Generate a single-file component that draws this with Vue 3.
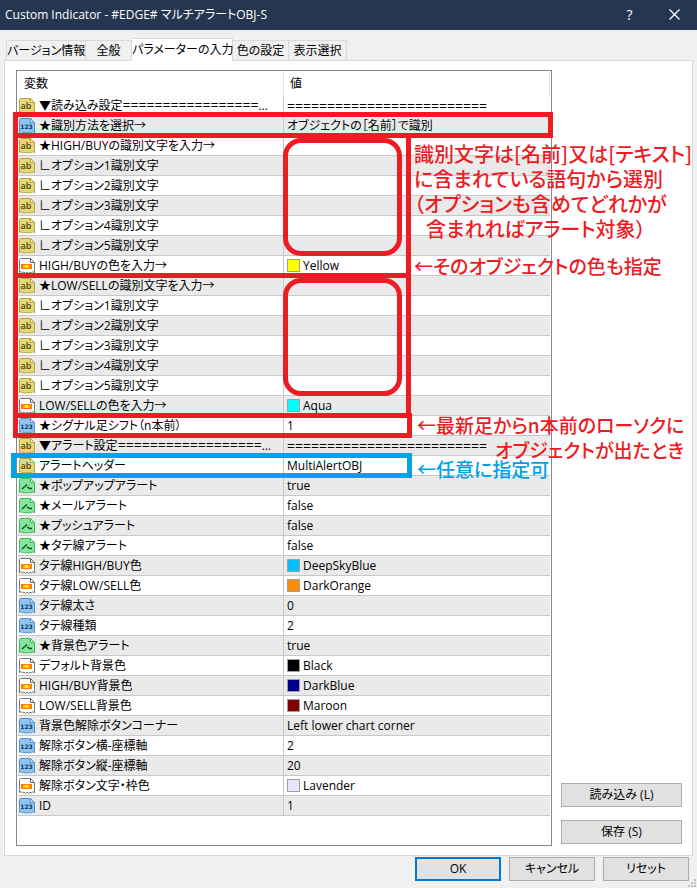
<template>
  <div class="dialog">
    <!-- タイトルバー -->
    <header class="titlebar">
      <span class="title">Custom Indicator - #EDGE# マルチアラートOBJ-S</span>
      <button class="title-btn" aria-label="ヘルプ">?</button>
      <button class="title-btn" aria-label="閉じる">
        <svg viewBox="0 0 11 11" width="11" height="11">
          <path d="M0.5 0.5 L10.5 10.5 M10.5 0.5 L0.5 10.5" stroke="#fff" stroke-width="1.3" fill="none" />
        </svg>
      </button>
    </header>

    <!-- タブ -->
    <nav class="tabs" role="tablist">
      <button
        v-for="(tab, index) in tabs"
        :key="tab"
        class="tab"
        :class="['tab-' + index, { active: currentTab === index }]"
        role="tab"
        :aria-selected="currentTab === index"
        @click="currentTab = index"
      >{{ tab }}</button>
    </nav>

    <main class="panel">
      <div class="list">
        <table>
          <colgroup>
            <col class="col-name" />
            <col />
          </colgroup>
          <thead>
            <tr>
              <th>変数</th>
              <th>値</th>
            </tr>
          </thead>
          <tbody>
            <tr v-for="(row, index) in rows" :key="index">
              <td>
                <div class="cell">
                  <svg class="icon" :class="row.type" viewBox="0 0 16 16">
                    <path
                      class="page"
                      d="M1.5 0.5 H11.5 L15.5 4.5 V15 L14 13.5 L12.5 15 L11 14 L9.5 15.5 L8 14 L6.5 15.5 L5 14 L3.5 15 L2 13.5 L0.5 14.5 V1.5 Z"
                    />
                    <path class="fold" d="M11.5 0.5 V4.5 H15.5 Z" />
                    <text v-if="row.type === 'str'" x="7" y="11" class="str-text">ab</text>
                    <text v-if="row.type === 'int'" x="7.5" y="11" class="int-text">123</text>
                    <path v-if="row.type === 'bool'" class="wave" d="M3 11 L8 6.5 M8 9.5 H9.5 L10.5 10.5 H13" />
                    <template v-if="row.type === 'color'">
                      <rect x="2" y="6" width="11" height="5" fill="#ff7a00" />
                      <rect x="4" y="7" width="7" height="3" fill="#ffb000" />
                      <rect x="6" y="7" width="3" height="3" fill="#fff000" />
                    </template>
                  </svg>
                  <span class="name">{{ row.name }}<span v-if="row.line" class="rule">{{ rule }}</span></span>
                </div>
              </td>
              <td>
                <div class="cell value">
                  <span v-if="row.color" class="swatch" :style="{ background: row.color }"></span>
                  <span v-if="row.line" class="rule">{{ rule }}</span>
                  <span v-else>{{ row.value }}</span>
                </div>
              </td>
            </tr>
          </tbody>
        </table>

        <!-- 説明用の枠 -->
        <div class="frame frame-method"></div>
        <div class="frame frame-high"></div>
        <div class="frame frame-low"></div>
        <div class="frame frame-shift"></div>
        <div class="frame frame-header"></div>
        <div class="frame round round-high"></div>
        <div class="frame round round-low"></div>

        <!-- 説明文 -->
        <p class="note note-text">
          識別文字は[名前]又は[テキスト]<br />に含まれている語句から選別<br />（オプションも含めてどれかが<br /><span class="indent">含まれればアラート対象）</span>
        </p>
        <p class="note note-color">←そのオブジェクトの色も指定</p>
        <p class="note note-shift">←最新足からn本前のローソクに<br /><span class="deep">オブジェクトが出たとき</span></p>
        <p class="note note-header">←任意に指定可</p>
      </div>

      <div class="side">
        <button class="btn">読み込み (L)</button>
        <button class="btn">保存 (S)</button>
      </div>
    </main>

    <footer class="footer">
      <button class="btn primary">OK</button>
      <button class="btn">キャンセル</button>
      <button class="btn">リセット</button>
    </footer>

    <svg class="grip" viewBox="0 0 9 9">
      <path d="M6 0h2v2h-2z M3 3h2v2h-2z M6 3h2v2h-2z M0 6h2v2h-2z M3 6h2v2h-2z M6 6h2v2h-2z" fill="#bfbfbf" />
    </svg>
  </div>
</template>

<script setup>
import { ref } from "vue";

const tabs = ["バージョン情報", "全般", "パラメーターの入力", "色の設定", "表示選択"];
const currentTab = ref(2);

const rule = "=".repeat(25);

const options = [1, 2, 3, 4, 5].map((n) => ({ type: "str", name: `∟オプション${n}識別文字` }));

const rows = [
  { type: "str", name: "▼読み込み設定", line: true },
  { type: "int", name: "★識別方法を選択→", value: "オブジェクトの［名前］で識別" },
  { type: "str", name: "★HIGH/BUYの識別文字を入力→" },
  ...options,
  { type: "color", name: "HIGH/BUYの色を入力→", value: "Yellow", color: "#ffff00" },
  { type: "str", name: "★LOW/SELLの識別文字を入力→" },
  ...options,
  { type: "color", name: "LOW/SELLの色を入力→", value: "Aqua", color: "#00ffff" },
  { type: "int", name: "★シグナル足シフト（n本前）", value: "1" },
  { type: "str", name: "▼アラート設定", line: true },
  { type: "str", name: "アラートヘッダー", value: "MultiAlertOBJ" },
  { type: "bool", name: "★ポップアップアラート", value: "true" },
  { type: "bool", name: "★メールアラート", value: "false" },
  { type: "bool", name: "★プッシュアラート", value: "false" },
  { type: "bool", name: "★タテ線アラート", value: "false" },
  { type: "color", name: "タテ線HIGH/BUY色", value: "DeepSkyBlue", color: "#00bfff" },
  { type: "color", name: "タテ線LOW/SELL色", value: "DarkOrange", color: "#ff8c00" },
  { type: "int", name: "タテ線太さ", value: "0" },
  { type: "int", name: "タテ線種類", value: "2" },
  { type: "bool", name: "★背景色アラート", value: "true" },
  { type: "color", name: "デフォルト背景色", value: "Black", color: "#000000" },
  { type: "color", name: "HIGH/BUY背景色", value: "DarkBlue", color: "#00008b" },
  { type: "color", name: "LOW/SELL背景色", value: "Maroon", color: "#800000" },
  { type: "int", name: "背景色解除ボタンコーナー", value: "Left lower chart corner" },
  { type: "int", name: "解除ボタン横-座標軸", value: "2" },
  { type: "int", name: "解除ボタン縦-座標軸", value: "20" },
  { type: "color", name: "解除ボタン文字・枠色", value: "Lavender", color: "#e6e6fa" },
  { type: "int", name: "ID", value: "1" },
];
</script>

<style>
body {
  margin: 0;
  background: #f0f0f0;
}
</style>

<style scoped>
.dialog {
  position: relative;
  display: flex;
  flex-direction: column;
  min-height: 100vh;
  box-sizing: border-box;
  background: #f0f0f0;
  color: #000;
  font-family: "Open Sans", "Noto Sans CJK JP", sans-serif;
  font-size: 12px;
  line-height: 18px;
  font-feature-settings: "palt";
}

button {
  padding: 0;
  font: inherit;
  font-feature-settings: inherit;
  color: inherit;
  white-space: nowrap;
}

/* タイトルバー */
.titlebar {
  display: flex;
  align-items: center;
  height: 30px;
  padding-left: 5px;
  background: #253650;
  color: #fff;
}

.title {
  flex: 1;
}

.title-btn {
  width: 45px;
  height: 30px;
  border: none;
  background: none;
  font-size: 14px;
}

/* タブ */
.tabs {
  display: flex;
  align-items: flex-end;
  height: 23px;
  margin: 8px 5px 0 6px;
}

.tab {
  height: 21px;
  border: 1px solid #d9d9d9;
  border-left: none;
  background: #f0f0f0;
}

.tab-0 {
  width: 80px;
  border-left: 1px solid #d9d9d9;
}

.tab-1 {
  width: 46px;
}

.tab-2 {
  width: 101px;
}

.tab-3 {
  width: 56px;
}

.tab-4 {
  width: 58px;
}

.tab.active {
  height: 23px;
  border-bottom: none;
  background: #fff;
  z-index: 1;
}

/* 本体 */
.panel {
  display: flex;
  gap: 9px;
  margin: -1px 4px 0;
  padding: 9px 10px 9px 11px;
  border: 1px solid #d9d9d9;
  background: #fff;
}

.list {
  position: relative;
  flex: 1;
  min-width: 0;
  padding: 1px 1px 29px;
  border: 1px solid #828790;
}

table {
  width: 100%;
  table-layout: fixed;
  border-collapse: separate;
  border-spacing: 0;
}

.col-name {
  width: 266px;
}

th {
  height: 24px;
  padding: 0 0 0 6px;
  border-right: 1px solid #e5e5e5;
  font-weight: normal;
  text-align: left;
}

td {
  height: 19px;
  padding: 0;
  border-bottom: 1px solid #c8c8c8;
}

td:first-child {
  border-right: 1px solid #c8c8c8;
}

tbody tr:nth-child(even) {
  background: #eaeaea;
}

.cell {
  display: flex;
  align-items: center;
  height: 19px;
  padding: 0 8px 0 1px;
  white-space: nowrap;
}

.value {
  gap: 3px;
  padding-left: 3px;
}

.name {
  min-width: 0;
  margin-left: 4px;
  overflow: hidden;
  text-overflow: ellipsis;
}

.rule {
  font-size: 14px;
}

.swatch {
  width: 11px;
  height: 11px;
  border: 1px solid #a0a0a0;
}

/* アイコン */
.icon {
  flex: none;
  width: 16px;
  height: 16px;
}

.icon text {
  font-family: "DejaVu Sans", sans-serif;
  font-weight: bold;
  text-anchor: middle;
}

.str .page {
  fill: #e6d878;
  stroke: #b5a53e;
}

.str .fold {
  fill: #fff6b8;
  stroke: #b5a53e;
}

.icon .str-text {
  font-family: "Open Sans", sans-serif;
  font-size: 9px;
  font-weight: 600;
  fill: #4c4200;
}

.int .page {
  fill: #8fc3f0;
  stroke: #5d94c7;
}

.int .fold {
  fill: #d0e8ff;
  stroke: #5d94c7;
}

.int-text {
  font-size: 6px;
  fill: #06345f;
}

.bool .page {
  fill: #86e59a;
  stroke: #45b95d;
}

.bool .fold {
  fill: #d0ffd8;
  stroke: #45b95d;
}

.wave {
  fill: none;
  stroke: #075c1b;
  stroke-width: 1.5;
}

.color .page {
  fill: #fff;
  stroke: #777;
}

.color .fold {
  fill: #fff;
  stroke: #666;
}

/* 枠 */
.frame {
  position: absolute;
  box-sizing: border-box;
  left: -4px;
  width: 398px;
  border: 5px solid #ed1c24;
}

.frame-method {
  top: 41px;
  right: -2px;
  width: auto;
  height: 26px;
}

.frame-high {
  top: 62px;
  height: 145px;
}

.frame-low {
  top: 202px;
  height: 145px;
}

.frame-shift {
  top: 342px;
  width: 399px;
  height: 25px;
}

.frame-header {
  top: 382px;
  left: -6px;
  width: 401px;
  height: 25px;
  border-color: #00a2e8;
}

.round {
  left: 266px;
  width: 119px;
  height: 118px;
  border-radius: 18px;
}

.round-high {
  top: 67px;
}

.round-low {
  top: 207px;
}

/* 説明文 */
.note {
  position: absolute;
  margin: 0;
  color: #ed1c24;
  font-family: "Noto Sans CJK JP", sans-serif;
  font-size: 19px;
  font-weight: 500;
  line-height: 25px;
  white-space: nowrap;
}

.note-text {
  top: 70px;
  left: 397px;
  font-size: 20px;
}

.note-color {
  top: 182px;
  left: 397px;
}

.note-shift {
  top: 341px;
  left: 400px;
}

.note-header {
  top: 385px;
  left: 400px;
  color: #00a2e8;
}

.indent {
  padding-left: 12px;
}

.deep {
  padding-left: 78px;
}

/* ボタン */
.side {
  display: flex;
  flex-direction: column;
  justify-content: flex-end;
  gap: 13px;
  width: 121px;
  padding-bottom: 2px;
}

.btn {
  height: 24px;
  border: 1px solid #adadad;
  background: #e1e1e1;
}

.btn.primary {
  border: 2px solid #0078d7;
}

.footer {
  display: flex;
  justify-content: flex-end;
  gap: 8px;
  padding: 1px 8px 6px;
}

.footer .btn {
  width: 86px;
}

.grip {
  position: absolute;
  right: 0;
  bottom: 0;
  width: 9px;
  height: 9px;
}
</style>
